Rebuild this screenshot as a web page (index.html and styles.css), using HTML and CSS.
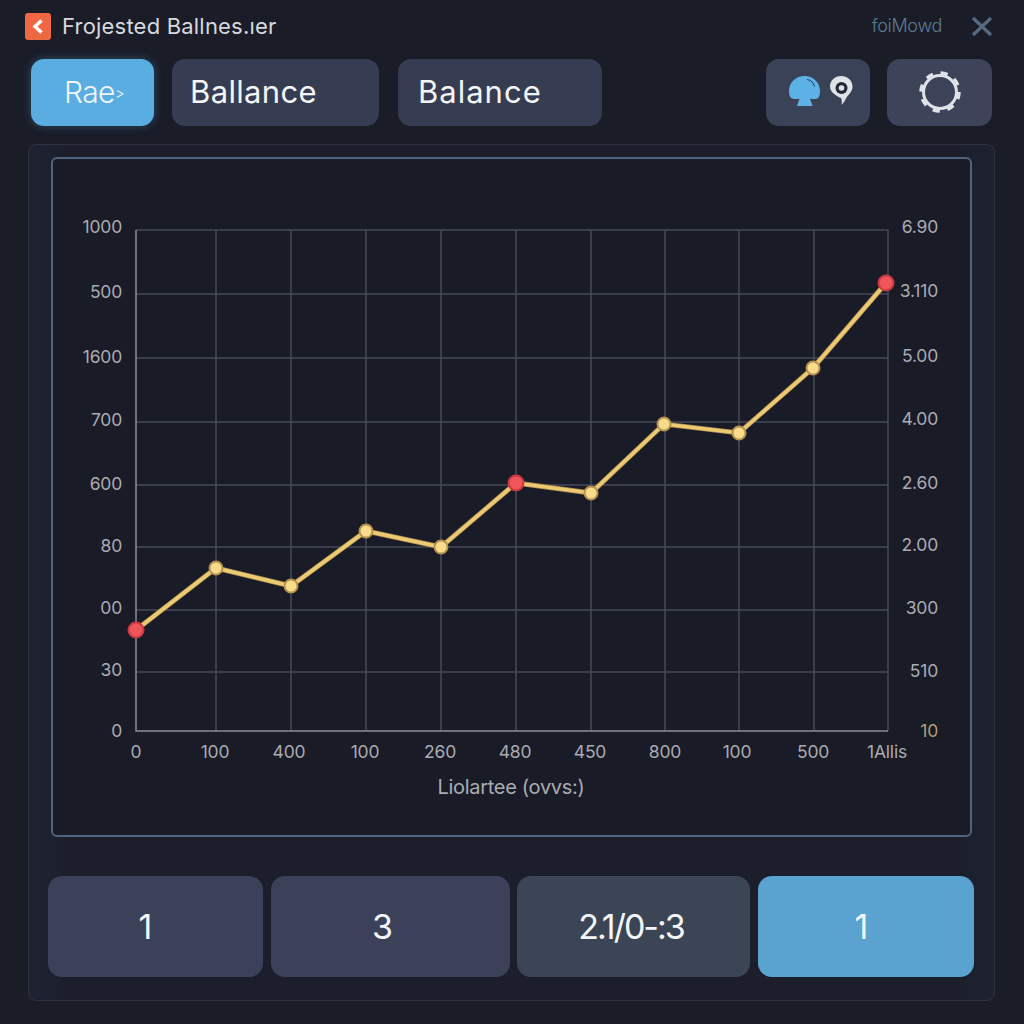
FILE: index.html
```html
<!DOCTYPE html>
<html lang="en">
<head>
<meta charset="utf-8">
<title>Projected Balance</title>
<link rel="stylesheet" href="styles.css">
</head>
<body>
<div class="app">
  <header class="header">
    <span class="back">
      <svg width="26" height="27" viewBox="0 0 26 27"><path d="M16.5 7.5 10 13.5l6.500 6" fill="none" stroke="#fff" stroke-width="3.400"/></svg>
    </span>
    <span class="title">Frojested Ballnes.ıer</span>
    <span class="link">foiMowd</span>
    <svg class="close" width="22" height="21" viewBox="0 0 22 21"><path d="M2 2l18 17M20 2 2 19" fill="none" stroke="#566a82" stroke-width="3.200"/></svg>
  </header>
  <nav class="toolbar">
    <button class="tool tool-active tool-rate">Rae<span class="tiny">&gt;</span></button>
    <button class="tool tool-a">Ballance</button>
    <button class="tool tool-b">Balance</button>
    <span class="spacer"></span>
    <button class="tool tool-icons">
      <svg width="66" height="30" viewBox="0 0 66 30">
        <path d="M0 15.500C0 6 7 0 15.500 0S31 6 31 15.500c0 3.500-1 6-2.500 7-3 1-5.500.5-7.500 0l2.500 7.500H8l2.500-7.500c-2 .5-4.500 1-7.500 0C1 21.500 0 19 0 15.500z" fill="#5cb2e4"/>
        <path d="M18 3.500c4 .6 6.500 3 7.500 7" fill="none" stroke="#1f3b52" stroke-width="1"/>
        <path d="M52 0c6.500 0 11.500 4.500 11.500 10.500 0 5-3.500 7.500-6 11-1.500 2.500-2.500 5.500-5 7.500 .5-2.500 .5-5-.5-7-4.500-2-11-5.500-11-11.500C41 4.500 46 0 52 0z" fill="#dfe2e6"/>
        <circle cx="52.500" cy="12" r="6" fill="#24293a"/>
        <circle cx="52.500" cy="12" r="2.800" fill="#dfe2e6"/>
      </svg>
    </button>
    <button class="tool tool-gear">
      <svg width="44" height="44" viewBox="0 0 44 44">
        <circle cx="22" cy="22" r="16.500" fill="none" stroke="#dfe2e6" stroke-width="3"/>
        <circle cx="22" cy="22" r="18.500" fill="none" stroke="#dfe2e6" stroke-width="4.500" stroke-dasharray="7 7.530"/>
      </svg>
    </button>
  </nav>
  <main class="panel">
    <section class="frame">
      <svg class="chart" width="917" height="676" viewBox="53 159 917 676">
        <g class="grid">
          <path d="M216 230V731M291 230V731M366 230V731M441 230V731M516 230V731M591 230V731M665 230V731M739 230V731M814 230V731"/>
          <path d="M136 294H888M136 358H888M136 422H888M136 485H888M136 547H888M136 610H888M136 672H888"/>
          <path d="M136 230H888V731"/>
        </g>
        <path class="axis" d="M136 230V731H888"/>
        <polyline class="line-shadow" points="136,630 216,568 291,586 366,531 441,547 516,483 591,493 664,424 739,433 813,368 886,283"/>
        <polyline class="line" points="136,630 216,568 291,586 366,531 441,547 516,483 591,493 664,424 739,433 813,368 886,283"/>
        <g class="dot">
          <circle cx="216" cy="568" r="6.500"/><circle cx="291" cy="586" r="6.500"/><circle cx="366" cy="531" r="6.500"/>
          <circle cx="441" cy="547" r="6.500"/><circle cx="591" cy="493" r="6.500"/><circle cx="664" cy="424" r="6.500"/>
          <circle cx="739" cy="433" r="6.500"/><circle cx="813" cy="368" r="6.500"/>
        </g>
        <g class="dot-hot">
          <circle cx="136" cy="630" r="7.500"/><circle cx="516" cy="483" r="7.500"/><circle cx="886" cy="283" r="7.500"/>
        </g>
        <g class="label label-end">
          <text x="122" y="233">1000</text><text x="122" y="298">500</text><text x="122" y="363">1600</text>
          <text x="122" y="426">700</text><text x="122" y="490">600</text><text x="122" y="552">80</text>
          <text x="122" y="614">00</text><text x="122" y="676">30</text><text x="122" y="737">0</text>
        </g>
        <g class="label label-end">
          <text x="938" y="233">6.90</text><text x="938" y="297">3.110</text><text x="938" y="362">5.00</text>
          <text x="938" y="425">4.00</text><text x="938" y="489">2.60</text><text x="938" y="551">2.00</text>
          <text x="938" y="614">300</text><text x="938" y="677">510</text><text class="label-warm" x="938" y="737">10</text>
        </g>
        <g class="label label-mid">
          <text x="136" y="758">0</text><text x="215" y="758">100</text><text x="289" y="758">400</text>
          <text x="365" y="758">100</text><text x="440" y="758">260</text><text x="515" y="758">480</text>
          <text x="590" y="758">450</text><text x="665" y="758">800</text><text x="737" y="758">100</text>
          <text x="813" y="758">500</text><text x="887" y="758">1Allis</text>
        </g>
        <text class="axis-title" x="511" y="794">Liolartee (ovvs:)</text>
      </svg>
    </section>
    <section class="stats">
      <div class="stat stat-indigo stat-first">1</div>
      <div class="stat stat-indigo stat-second">3</div>
      <div class="stat stat-slate">2.1/0-:3</div>
      <div class="stat stat-blue">1</div>
    </section>
  </main>
</div>
</body>
</html>
```
FILE: styles.css
```css
* { box-sizing: border-box; }
html, body { margin: 0; height: 100%; }
body {
  background: #1a1c28;
  font-family: Inter, "Liberation Sans", sans-serif;
  color: #f1f3f6;
}
.app { width: 1024px; height: 1024px; padding: 13px 28px 0 25px; display: flex; flex-direction: column; }
.header { display: flex; align-items: center; height: 27px; }
.back { width: 26px; height: 27px; background: #ee6844; border-radius: 3px; display: block; }
.back svg { display: block; }
.title { margin-left: 11px; font-size: 22px; color: #d6d9de; letter-spacing: .2px; padding-bottom: 2px; }
.link { margin-left: auto; font-size: 18px; color: #5c7c92; letter-spacing: -0.3px; font-weight: 300; padding-bottom: 2px; }
.close { margin-left: 29px; margin-right: 3px; }
.toolbar { display: flex; margin: 19px 4px 0 6px; height: 67px; }
.tool {
  font: inherit; color: #f3f5f7; border: 0; border-radius: 13px; height: 67px; padding: 0 0 2px;
  background: #363c52; font-size: 31px; text-align: left;
}
.tool-active { background: #59ade0; box-shadow: 0 0 10px rgba(80, 170, 225, .35); }
.tool-rate { width: 123px; padding-left: 33px; font-size: 30px; font-weight: 300; letter-spacing: -0.6px; }
.tiny { font-size: 15px; vertical-align: 4px; }
.tool-a { width: 207px; margin-left: 18px; padding-left: 18px; letter-spacing: .35px; }
.tool-b { width: 204px; margin-left: 19px; padding-left: 20px; letter-spacing: 1px; }
.spacer { flex: 1; }
.tool-icons { width: 104px; background: #3a4257; display: flex; align-items: center; padding: 0 0 4px 23px; }
.tool-gear { width: 105px; margin-left: 17px; background: #3d4358; display: flex; align-items: center; justify-content: center; }
.tool svg { display: block; }
.panel {
  margin: 18px 0 0 3px; width: 967px; height: 857px; padding: 12px 22px 0 22px;
  border: 1px solid #2d3141; border-radius: 8px;
  background: linear-gradient(90deg, #1e2333 0, #1c1e2b 4%, #1c1e2b 96%, #1e2231 100%);
}
.frame { width: 921px; height: 680px; border: 2px solid #4f6480; border-radius: 6px; background: #191b27; }
.chart { display: block; }
.grid path { fill: none; stroke: #464a59; stroke-width: 1.500; }
.axis { fill: none; stroke: #8a8d98; stroke-width: 1.500; }
.line-shadow { fill: none; stroke: #a98a4d; stroke-width: 5; }
.line { fill: none; stroke: #ecc973; stroke-width: 3.500; }
.dot circle { fill: #f8dc8c; stroke: #b5924f; stroke-width: 2; }
.dot-hot circle { fill: #f0555a; stroke: #c93a40; stroke-width: 2; }
.label text { font-size: 17.500px; fill: #a9abb2; letter-spacing: -0.2px; }
.label-end text { text-anchor: end; }
.label-mid text { text-anchor: middle; }
.label .label-warm { fill: #b39d74; }
.axis-title { font-size: 20px; fill: #a9abb2; text-anchor: middle; letter-spacing: -0.3px; }
.stats { display: grid; grid-template-columns: 215px 239px 233px 216px; gap: 7.500px; margin: 39px 0 0 -3px; }
.stat { height: 101px; border-radius: 14px; display: flex; align-items: center; justify-content: center; font-size: 34px; color: #f3f5f7; }
.stat-first { padding-right: 20px; }
.stat-second { padding-right: 15px; }
.stat-indigo { background: #3b4159; }
.stat-slate { background: #3b4555; letter-spacing: -2px; padding-right: 5px; }
.stat-blue { background: #5aa3d1; padding-right: 8px; }
```
